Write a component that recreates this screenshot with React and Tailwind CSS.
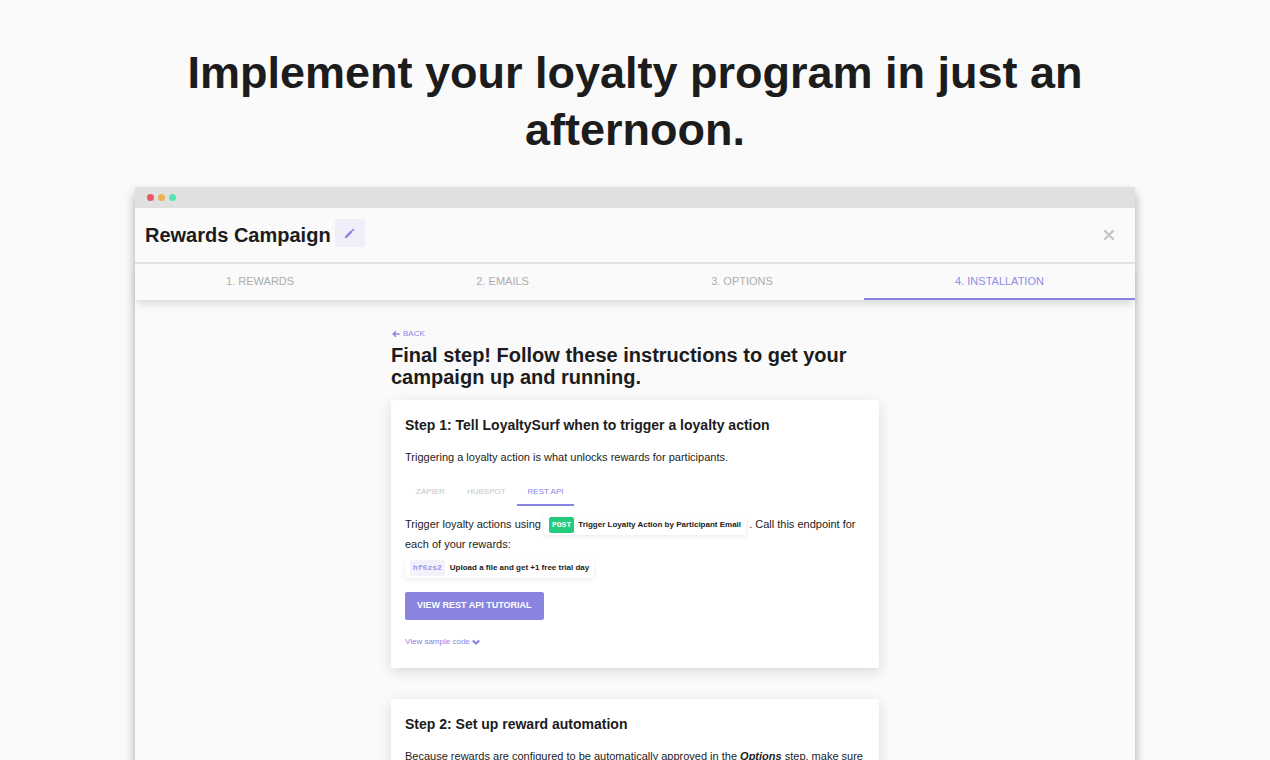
import React from "react";

const campaignSteps = ["1. Rewards", "2. Emails", "3. Options", "4. Installation"];
const integrations = ["Zapier", "Hubspot", "REST API"];

function TitleBar() {
  return (
    <div className="flex h-[21px] shrink-0 items-center gap-1 bg-[#e0e0e0] px-3">
      <span className="size-[7px] rounded-full bg-[#ea555f]" />
      <span className="size-[7px] rounded-full bg-[#e9b34f]" />
      <span className="size-[7px] rounded-full bg-[#56e5b0]" />
    </div>
  );
}

function CampaignHeader() {
  return (
    <header className="flex h-[56px] shrink-0 items-center border-b-2 border-[#e2e2e2] pr-4 pl-[10px]">
      <h2 className="text-[20px] leading-6 font-bold">Rewards Campaign</h2>
      <button
        type="button"
        aria-label="Edit campaign name"
        className="mb-1 ml-1 flex h-7 w-[30px] items-center justify-center rounded-xs bg-[#f0eff9] text-[#8885e2]"
      >
        <svg viewBox="0 0 12 12" className="size-[11px]" fill="currentColor" aria-hidden="true">
          <path d="M.8 11.200l.6-2.500 6.200-6.200 1.900 1.900-6.200 6.200-2.500.6zM8.300 1.800l.9-.8c.3-.3.7-.3 1 0l.8.8c.3.3.3.7 0 1l-.8.9-1.900-1.900z" />
        </svg>
      </button>
      <button
        type="button"
        aria-label="Close"
        className="ml-auto flex size-5 items-center justify-center text-[#c6c6c6]"
      >
        <svg viewBox="0 0 12 12" className="size-3" fill="none" stroke="currentColor" strokeWidth="2.400" strokeLinecap="round" aria-hidden="true">
          <path d="M2 2l8 8M10 2l-8 8" />
        </svg>
      </button>
    </header>
  );
}

function StepNav() {
  return (
    <nav className="flex h-9 shrink-0 shadow-[0_6px_8px_-2px_rgba(0,0,0,0.13)]">
      {campaignSteps.map((step, i) => (
        <a
          key={step}
          href="#"
          className={
            i === 3
              ? "flex flex-auto items-center justify-center border-b-2 border-[#8885e2] text-[11px] text-[#8f8ce6] uppercase"
              : "flex flex-auto items-center justify-center border-b-2 border-transparent text-[11px] text-[#adadad] uppercase"
          }
        >
          {step}
        </a>
      ))}
    </nav>
  );
}

function Card({ title, children }) {
  return (
    <section className="rounded-xs bg-white px-[14px] pt-4 pb-[18px] shadow-[0_4px_14px_rgba(0,0,0,0.13)]">
      <h4 className="text-[14px] leading-[18px] font-bold">{title}</h4>
      {children}
    </section>
  );
}

export default function App() {
  return (
    <div className="flex h-screen flex-col items-center overflow-hidden bg-[#fafafa] px-[135px] pt-11 font-['Liberation_Sans',Arial,sans-serif] text-[#1c1c1c]">
      <h1 className="max-w-[940px] shrink-0 text-center text-[45px] leading-[57px] font-bold">
        Implement your loyalty program in just an afternoon.
      </h1>
      <main className="mt-[29px] flex w-full grow flex-col bg-[#fafafa] shadow-[0_6px_10px_rgba(0,0,0,0.32)]">
        <TitleBar />
        <CampaignHeader />
        <StepNav />
        <div className="mx-auto w-full max-w-[488px] pt-[26px]">
          <a href="#" className="ml-px flex h-4 items-center gap-[3px] text-[8px] text-[#8885e2]">
            <svg viewBox="0 0 8 8" className="size-2" fill="none" stroke="currentColor" strokeWidth="1.400" aria-hidden="true">
              <path d="M7.600 4H1.200M4 1.200L1.200 4 4 6.800" />
            </svg>
            BACK
          </a>
          <h3 className="mt-[2px] text-[20px] leading-[22px] font-bold">
            Final step! Follow these instructions to get your campaign up and running.
          </h3>
          <div className="mt-3 flex flex-col gap-[31px]">
            <Card title="Step 1: Tell LoyaltySurf when to trigger a loyalty action">
              <p className="mt-[13px] text-[11px] leading-5">
                Triggering a loyalty action is what unlocks rewards for participants.
              </p>
              <div role="tablist" className="mt-3 flex h-[27px]">
                {integrations.map((name, i) => (
                  <button
                    key={name}
                    type="button"
                    role="tab"
                    aria-selected={i === 2}
                    className={
                      i === 2
                        ? "border-b-2 border-[#8885e2] px-[11px] text-[8px] text-[#8885e2] uppercase"
                        : "border-b-2 border-transparent px-[11px] text-[8px] text-[#c6c6c6] uppercase"
                    }
                  >
                    {name}
                  </button>
                ))}
              </div>
              <p className="mt-2 text-[11px] leading-5">
                Trigger loyalty actions using{" "}
                <a
                  href="#"
                  className="-my-1 inline-flex h-5 items-center gap-1 rounded-xs bg-white px-[5px] align-middle text-[8px] leading-4 font-bold shadow-[0_2px_5px_rgba(0,0,0,0.08)]"
                >
                  <span className="rounded-xs bg-[#25cb7c] px-[3px] font-['Liberation_Mono',monospace] text-white">POST</span>
                  Trigger Loyalty Action by Participant Email
                </a>{" "}
                . Call this endpoint for each of your rewards:
              </p>
              <div className="mt-[4px] flex h-5 w-fit items-center gap-[5px] rounded-xs px-[5px] text-[8px] leading-4 font-bold shadow-[0_2px_5px_rgba(0,0,0,0.08)]">
                <code className="rounded-xs bg-[#f3f2fc] px-[3px] font-['Liberation_Mono',monospace] text-[#9a97e8]">hf6zs2</code>
                Upload a file and get +1 free trial day
              </div>
              <button
                type="button"
                className="mt-[14px] flex h-7 items-center rounded-xs bg-[#8884e0] px-3 text-[9px] font-bold text-white uppercase"
              >
                View REST API tutorial
              </button>
              <button type="button" className="mt-[14px] flex h-4 items-center gap-[2px] text-[8px] text-[#8885e2]">
                View sample code
                <svg viewBox="0 0 8 8" className="size-2" fill="none" stroke="currentColor" strokeWidth="2.200" aria-hidden="true">
                  <path d="M.8 2.500L4 5.500l3.200-3" />
                </svg>
              </button>
            </Card>
            <Card title="Step 2: Set up reward automation">
              <p className="mt-[13px] text-[11px] leading-5">
                Because rewards are configured to be automatically approved in the{" "}
                <em className="font-bold">Options</em> step, make sure
              </p>
            </Card>
          </div>
        </div>
      </main>
    </div>
  );
}
